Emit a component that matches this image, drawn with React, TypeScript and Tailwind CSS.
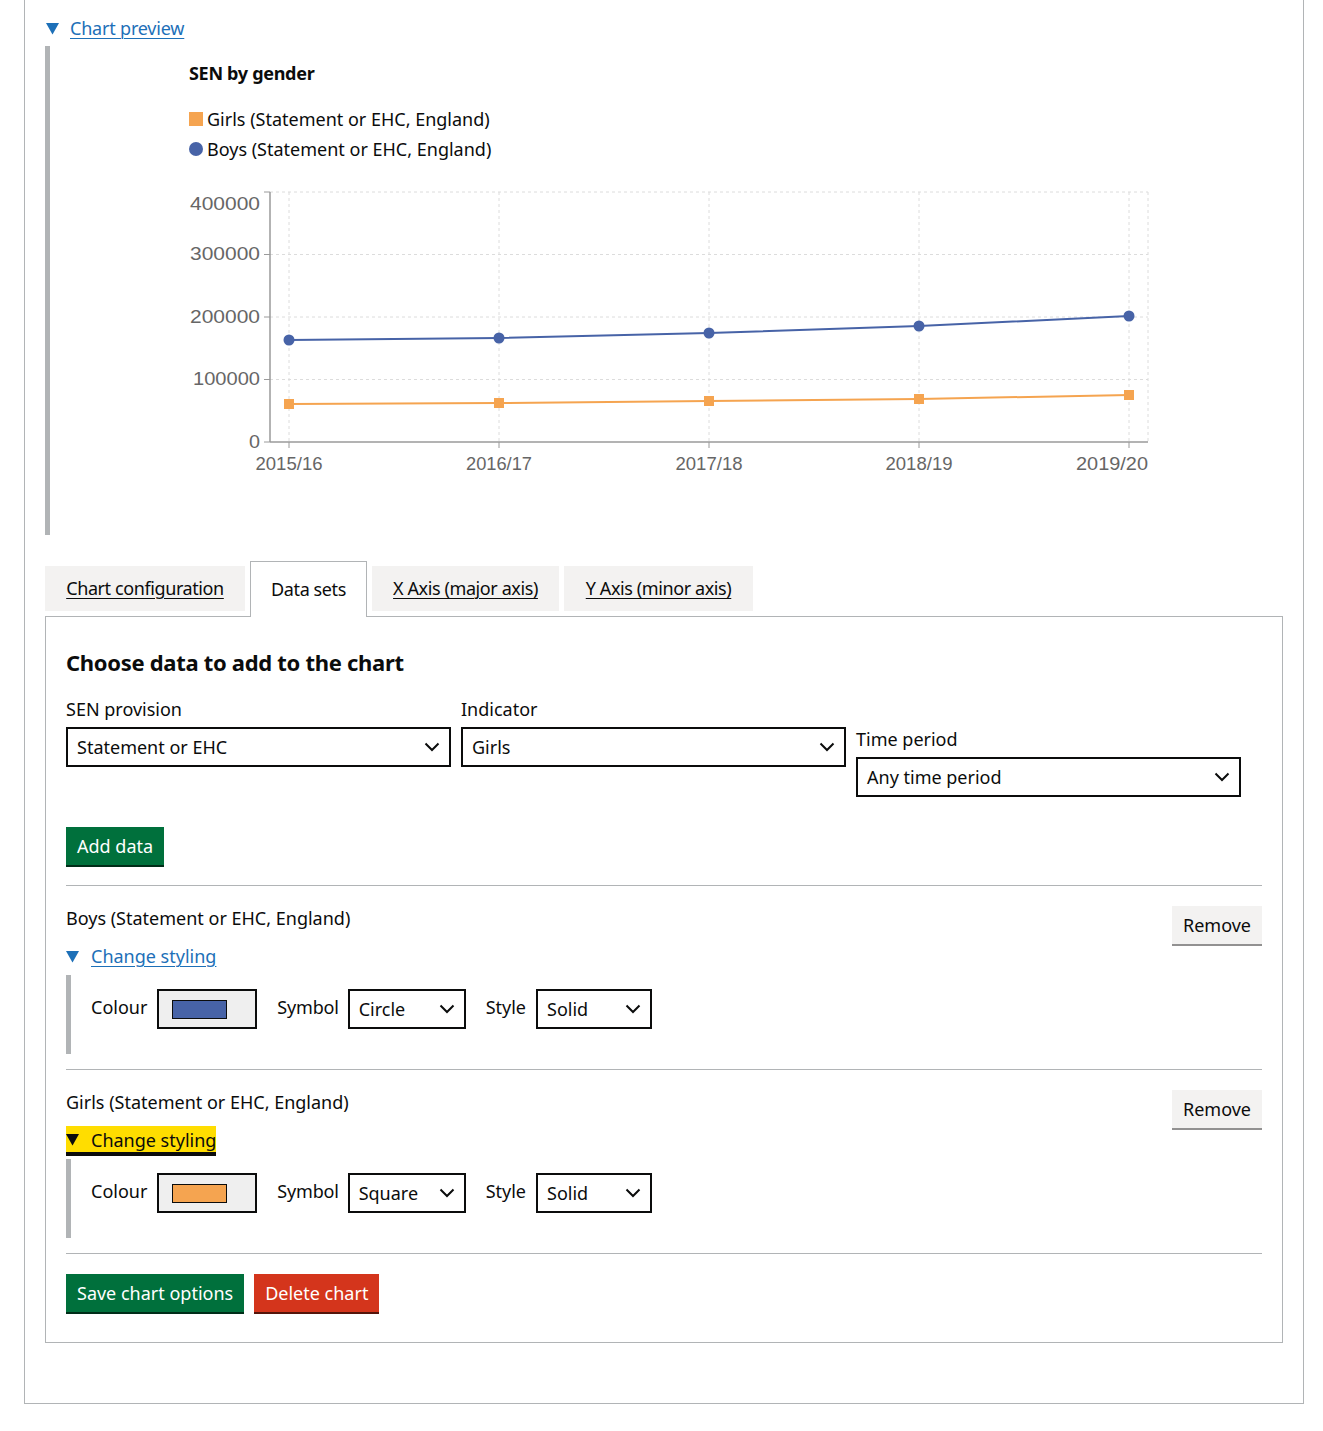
import React from "react";

const font = { fontFamily: '"Noto Sans", Arial, sans-serif' };

function Chevron() {
  return (
    <svg width="16" height="10" viewBox="0 0 16 10" className="shrink-0">
      <path d="M1.5 1.5 L8 8 L14.5 1.5" fill="none" stroke="#0b0c0c" strokeWidth="2" />
    </svg>
  );
}

function Select({ value, w }: { value: string; w: string }) {
  return (
    <div className={`${w} h-[40px] border-2 border-[#0b0c0c] bg-white flex items-center justify-between pl-[9px] pr-[9px] text-[18px] leading-[25px] text-[#0b0c0c]`}>
      <span>{value}</span>
      <Chevron />
    </div>
  );
}

function Triangle({ color }: { color: string }) {
  return (
    <svg width="13" height="12" viewBox="0 0 13 12" className="shrink-0">
      <polygon points="0,0 13,0 6.5,11.5" fill={color} />
    </svg>
  );
}

function Button({ children, variant }: { children: React.ReactNode; variant: "green" | "red" | "grey" }) {
  const cls =
    variant === "green"
      ? "bg-[#00703c] text-white shadow-[0_2px_0_#002d18]"
      : variant === "red"
      ? "bg-[#d4351c] text-white shadow-[0_2px_0_#55150b]"
      : "bg-[#f3f2f1] text-[#0b0c0c] shadow-[0_2px_0_#929191]";
  return (
    <div className={`${cls} h-[38px] px-[11px] flex items-center text-[18px] leading-[25px]`}>{children}</div>
  );
}

function DataSet({ name, colour, symbol, focused }: { name: string; colour: string; symbol: string; focused?: boolean }) {
  return (
    <div className="flex justify-between pt-[20px] pb-[15px] border-b border-[#b1b4b6]">
      <div>
        <div className="text-[18px] leading-[25px] text-[#0b0c0c] h-[25px]">{name}</div>
        <div className="mt-[13px] h-[25px] flex">
          {focused ? (
            <div className="flex items-center bg-[#ffdd00] shadow-[0_-2px_0_#ffdd00,0_4px_0_#0b0c0c] h-[24px]">
              <Triangle color="#0b0c0c" />
              <span className="ml-[12px] text-[18px] leading-[25px] text-[#0b0c0c]">Change styling</span>
            </div>
          ) : (
            <div className="flex items-center">
              <Triangle color="#1d70b8" />
              <span className="ml-[12px] text-[18px] leading-[25px] text-[#1d70b8] underline underline-offset-[3px] decoration-1">Change styling</span>
            </div>
          )}
        </div>
        <div className="mt-[6px] border-l-[5px] border-[#b1b4b6] h-[79px] pl-[20px] pt-[14px] flex items-start">
          <div className="flex items-center h-[40px]">
            <span className="text-[18px] leading-[25px] text-[#0b0c0c] -mt-[3px]">Colour</span>
            <div className="ml-[10px] w-[100px] h-[40px] border-2 border-[#0b0c0c] bg-[#efefef] flex items-center">
              <div className="ml-[13px] w-[55px] h-[19px] border border-[#0b0c0c]" style={{ background: colour }} />
            </div>
          </div>
          <div className="flex items-center h-[40px] ml-[20px]">
            <span className="text-[18px] leading-[25px] tracking-[-0.2px] text-[#0b0c0c] -mt-[3px]">Symbol</span>
            <div className="ml-[9px]">
              <Select value={symbol} w="w-[118px]" />
            </div>
          </div>
          <div className="flex items-center h-[40px] ml-[20px]">
            <span className="text-[18px] leading-[25px] text-[#0b0c0c] -mt-[3px]">Style</span>
            <div className="ml-[10px]">
              <Select value="Solid" w="w-[116px]" />
            </div>
          </div>
        </div>
      </div>
      <div>
        <Button variant="grey">Remove</Button>
      </div>
    </div>
  );
}

function Chart() {
  const xs = [119, 329, 539, 749, 959];
  const labels = ["2015/16", "2016/17", "2017/18", "2018/19", "2019/20"];
  const boys = [159, 157, 152, 145, 135];
  const girls = [223, 222, 220, 218, 214];
  const grid = "#dcdcdc";
  const axis = "#9a9a9a";
  const txt = "#666666";
  const yTicks: [number, string, number][] = [
    [23, "400000", 70],
    [73, "300000", 70],
    [136, "200000", 70],
    [198, "100000", 67],
    [261, "0", 11],
  ];
  return (
    <svg width="1000" height="300" viewBox="0 0 1000 300">
      {[11, 73.5, 136, 198.5].map((y) => (
        <line key={y} x1="100" x2="978" y1={y} y2={y} stroke={grid} strokeDasharray="3 3" />
      ))}
      {[...xs, 978].map((x) => (
        <line key={x} x1={x} x2={x} y1="11" y2="261" stroke={grid} strokeDasharray="3 3" />
      ))}
      <line x1="100" x2="100" y1="11" y2="261" stroke={axis} strokeWidth="1.5" />
      <line x1="100" x2="978" y1="261" y2="261" stroke={axis} strokeWidth="1.5" />
      {[11, 73.5, 136, 198.5, 261].map((y) => (
        <line key={y} x1="94" x2="100" y1={y} y2={y} stroke={axis} />
      ))}
      {xs.map((x) => (
        <line key={x} x1={x} x2={x} y1="261" y2="267" stroke={axis} />
      ))}
      {yTicks.map(([y, t, l]) => (
        <text
          key={t}
          x="90"
          y={y + 6}
          textAnchor="end"
          fill={txt}
          fontSize="18.5"
          fontFamily='"Liberation Sans", Arial, sans-serif'
          textLength={l}
          lengthAdjust="spacingAndGlyphs"
        >
          {t}
        </text>
      ))}
      {labels.map((t, i) => (
        <text
          key={t}
          x={i === 4 ? 978 : xs[i]}
          y="289"
          textAnchor={i === 4 ? "end" : "middle"}
          fill={txt}
          fontSize="18.5"
          fontFamily='"Liberation Sans", Arial, sans-serif'
          textLength={i === 4 ? 72 : i === 1 ? 66 : 67}
          lengthAdjust="spacingAndGlyphs"
        >
          {t}
        </text>
      ))}
      <polyline points={xs.map((x, i) => `${x},${girls[i]}`).join(" ")} fill="none" stroke="#f5a450" strokeWidth="2" />
      <polyline points={xs.map((x, i) => `${x},${boys[i]}`).join(" ")} fill="none" stroke="#4763a7" strokeWidth="2" />
      {xs.map((x, i) => (
        <rect key={x} x={x - 5} y={girls[i] - 5} width="10" height="10" fill="#f5a450" />
      ))}
      {xs.map((x, i) => (
        <circle key={x} cx={x} cy={boys[i]} r="5.5" fill="#4763a7" />
      ))}
    </svg>
  );
}

const tabCls =
  "h-[45px] mb-[6px] bg-[#f3f2f1] flex items-center justify-center text-[18px] tracking-[-0.4px] text-[#0b0c0c] underline underline-offset-[3px] decoration-1";

export default function App() {
  return (
    <div className="bg-white w-[1323px] min-h-[1431px]" style={font}>
      <div className="ml-[24px] w-[1280px] h-[1404px] border-x border-b border-[#b1b4b6] pl-[20px] pr-[20px] pt-[16px]">
        <div className="flex items-center h-[25px] pl-[1px]">
          <Triangle color="#1d70b8" />
          <span className="ml-[11px] text-[18px] leading-[25px] tracking-[-0.2px] text-[#1d70b8] underline underline-offset-[3px] decoration-1">
            Chart preview
          </span>
        </div>
        <div className="mt-[5px] border-l-[5px] border-[#b1b4b6] h-[489px] pt-[15px]">
          <div className="pl-[139px]">
            <div className="text-[18px] leading-[25px] font-bold tracking-[-0.3px] text-[#0b0c0c]">SEN by gender</div>
            <div className="mt-[18px] flex items-center h-[30px]">
              <div className="w-[14px] h-[14px] bg-[#f5a450]" />
              <span className="ml-[4px] text-[18px] leading-[25px] text-[#0b0c0c]">Girls (Statement or EHC, England)</span>
            </div>
            <div className="flex items-center h-[30px]">
              <div className="w-[14px] h-[14px] rounded-full bg-[#4763a7]" />
              <span className="ml-[4px] text-[18px] leading-[25px] text-[#0b0c0c]">Boys (Statement or EHC, England)</span>
            </div>
          </div>
          <div className="ml-[120px] mt-[17px]">
            <Chart />
          </div>
        </div>

        <div className="mt-[26px] relative z-10 -mb-px flex items-end gap-[5px]">
          <div className={`w-[200px] ${tabCls}`}>Chart configuration</div>
          <div className="w-[117px] h-[56px] bg-white border-x border-t border-[#b1b4b6] flex items-center justify-center text-[18px] tracking-[-0.4px] text-[#0b0c0c] pb-[1px]">
            Data sets
          </div>
          <div className={`w-[187px] ${tabCls}`}>X Axis (major axis)</div>
          <div className={`w-[189px] ${tabCls}`}>Y Axis (minor axis)</div>
        </div>

        <div className="w-[1238px] h-[727px] border border-[#b1b4b6] px-[20px] pt-[30px]">
          <h2 className="text-[22px] leading-[30px] font-bold tracking-[-0.3px] text-[#0b0c0c]">Choose data to add to the chart</h2>
          <div className="mt-[20px] flex gap-[10px]">
            <div>
              <div className="text-[18px] leading-[25px] text-[#0b0c0c] mb-[5px]">SEN provision</div>
              <Select value="Statement or EHC" w="w-[385px]" />
            </div>
            <div>
              <div className="text-[18px] leading-[25px] text-[#0b0c0c] mb-[5px]">Indicator</div>
              <Select value="Girls" w="w-[385px]" />
            </div>
            <div className="mt-[30px]">
              <div className="text-[18px] leading-[25px] text-[#0b0c0c] mb-[5px]">Time period</div>
              <Select value="Any time period" w="w-[385px]" />
            </div>
          </div>
          <div className="mt-[30px] flex">
            <Button variant="green">Add data</Button>
          </div>
          <div className="mt-[20px] border-b border-[#b1b4b6]" />
          <DataSet name="Boys (Statement or EHC, England)" colour="#4763a7" symbol="Circle" />
          <DataSet name="Girls (Statement or EHC, England)" colour="#f5a450" symbol="Square" focused />
          <div className="mt-[20px] flex gap-[10px]">
            <Button variant="green">Save chart options</Button>
            <Button variant="red">Delete chart</Button>
          </div>
        </div>
      </div>
    </div>
  );
}
